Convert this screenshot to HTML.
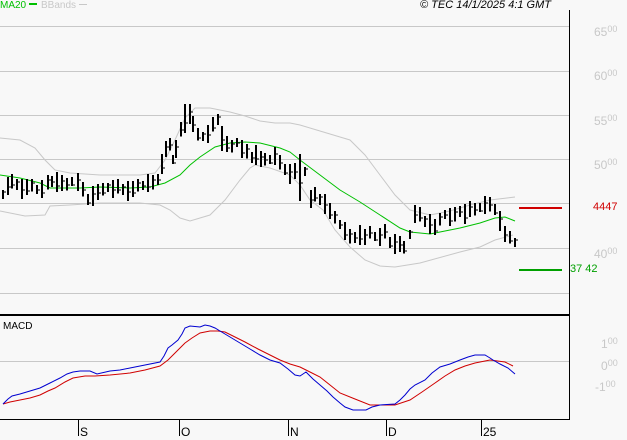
<!DOCTYPE html>
<html><head><meta charset="utf-8"><style>
html,body{margin:0;padding:0;background:#f8f8f8;width:627px;height:440px;overflow:hidden;font-family:"Liberation Sans",sans-serif}
.t{position:absolute;font-size:11px;white-space:nowrap}
.g{color:#c8c8c8;font-size:12px}
.g sup{font-size:9px;vertical-align:4px}
</style></head><body>
<div class="t" style="left:0;top:0;color:#00c000;font-size:10px">MA20 <span style="display:inline-block;width:8px;height:2px;background:#00c000;vertical-align:3px"></span></div>
<div class="t" style="left:41px;top:0;color:#c8c8c8;font-size:10px">BBands <span style="display:inline-block;width:8px;height:1px;background:#c8c8c8;vertical-align:3px"></span></div>
<div class="t" style="left:420px;top:-1px;color:#000;font-style:italic">© TEC 14/1/2025 4:1 GMT</div>
<div class="t g" style="left:594px;top:24px">65<sup>00</sup></div>
<div class="t g" style="left:594px;top:68px">60<sup>00</sup></div>
<div class="t g" style="left:594px;top:113px">55<sup>00</sup></div>
<div class="t g" style="left:594px;top:157px">50<sup>00</sup></div>
<div class="t g" style="left:594px;top:246px">40<sup>00</sup></div>
<div class="t" style="left:593px;top:201px;color:#d00000;font-size:11px">4447</div>
<div class="t" style="left:570px;top:263px;color:#00a000;font-size:11px">37 42</div>
<div class="t g" style="left:601px;top:336px">1<sup>00</sup></div>
<div class="t g" style="left:601px;top:358px">0<sup>00</sup></div>
<div class="t g" style="left:595px;top:379px">-1<sup>00</sup></div>
<div class="t" style="left:3px;top:321px;font-size:10px">MACD</div>
<div class="t" style="left:80px;top:425px;font-size:12px">S</div>
<div class="t" style="left:181px;top:425px;font-size:12px">O</div>
<div class="t" style="left:290px;top:425px;font-size:12px">N</div>
<div class="t" style="left:388px;top:425px;font-size:12px">D</div>
<div class="t" style="left:483px;top:425px;font-size:12px">25</div>
<svg id="s" width="627" height="440" style="position:absolute;left:0;top:0" xmlns="http://www.w3.org/2000/svg">
<g stroke="#c8c8c8" stroke-width="1">
<line x1="0" y1="26.5" x2="569" y2="26.5"/><line x1="0" y1="71.5" x2="569" y2="71.5"/><line x1="0" y1="115.5" x2="569" y2="115.5"/><line x1="0" y1="159.5" x2="569" y2="159.5"/><line x1="0" y1="203.5" x2="569" y2="203.5"/><line x1="0" y1="248.5" x2="569" y2="248.5"/><line x1="0" y1="293.5" x2="569" y2="293.5"/><line x1="0" y1="361.5" x2="569" y2="361.5"/>
</g>
<g stroke="#000" stroke-width="1" fill="none">
<line x1="569.5" y1="10" x2="569.5" y2="419"/>
<line x1="0" y1="315" x2="570" y2="315" stroke-width="2"/>
<line x1="0" y1="419.5" x2="570" y2="419.5"/>
<line x1="78.5" y1="419" x2="78.5" y2="436"/><line x1="179.5" y1="419" x2="179.5" y2="436"/><line x1="288.5" y1="419" x2="288.5" y2="436"/><line x1="386.5" y1="419" x2="386.5" y2="436"/><line x1="481.5" y1="419" x2="481.5" y2="436"/>
</g>
<line x1="519" y1="208" x2="562" y2="208" stroke="#d00000" stroke-width="2"/>
<line x1="519" y1="270" x2="562" y2="270" stroke="#00a000" stroke-width="2"/>
<g fill="none" stroke-width="1">
<polyline stroke="#c8c8c8" points="0,138 20,140 35,148 45,160 55,170 70,173 100,175 140,175 155,173 165,160 175,140 185,118 195,108 210,108 230,112 245,116 260,121 275,123 290,123 300,125 320,131 340,137 350,140 365,155 380,175 395,195 410,210 430,215 450,211 470,205 490,200 515,197"/>
<polyline stroke="#c8c8c8" points="0,211 25,216 45,215 50,206 70,205 100,203 140,203 160,205 170,210 180,218 190,221 200,218 210,215 225,200 240,180 250,168 255,165 270,168 290,175 300,185 310,200 323,210 335,230 350,247 365,260 380,266 395,267 420,263 460,252 480,247 495,240 513,235"/>
<polyline stroke="#00c000" points="0,175 20,178 40,183 50,188 80,188 100,187 130,188 150,187 165,183 180,175 190,165 200,157 215,147 230,143 245,142 260,143 280,148 290,152 300,160 320,175 340,190 360,202 380,215 400,228 410,232 420,233 430,234 450,230 460,228 480,223 495,218 505,217 515,221"/>
<polyline stroke="#d00000" points="3,404 10,402 20,400 30,398 40,395 48,391 55,388 65,382 73,378 85,376 95,376 110,375 130,373 145,370 160,366 168,360 175,353 180,348 185,343 192,338 200,333 210,331 218,331 225,332 235,337 245,342 258,349 270,355 280,360 290,364 300,367 310,372 320,377 330,385 340,393 355,399 370,405 395,405 410,400 422,392 435,383 445,376 455,370 465,366 475,363 490,360 505,362 513,366"/>
<polyline stroke="#0000d0" points="3,404 8,399 12,396 20,394 30,391 40,388 50,383 60,378 67,374 73,372 80,371 90,371 97,374 110,371 120,370 130,368 145,365 160,362 164,356 168,348 172,345 178,340 182,334 185,328 190,326 200,327 205,325 210,326 215,328 220,331 230,337 240,343 250,349 260,355 270,360 280,363 288,369 295,375 300,376 306,372 313,379 320,385 327,391 333,397 340,403 345,407 353,410 366,410 372,407 380,405 395,404 400,400 405,395 410,389 415,385 425,380 432,373 440,367 450,364 460,360 468,357 475,355 485,355 490,358 493,360 500,364 508,368 515,374"/>
</g>
<g id="bars" stroke="#000" stroke-width="2" shape-rendering="crispEdges"></g>
</svg>
<script>
var d=[[3,195],[8,187],[12,182],[17,185],[22,190],[27,188],[32,186],[37,190],[42,190],[48,183],[52,182],[57,183],[62,184],[67,185],[72,182],[78,183],[83,190],[88,200],[93,197],[98,193],[103,190],[108,188],[113,190],[118,187],[123,190],[128,192],[133,190],[138,186],[143,186],[148,184],[153,183],[158,180],[162,165],[166,150],[170,145],[173,160],[176,150],[181,130],[185,120],[190,115],[193,125],[198,135],[203,137],[208,135],[213,125],[218,120],[222,140],[227,145],[232,147],[237,143],[242,150],[247,152],[252,158],[256,156],[261,160],[265,160],[270,160],[275,157],[280,163],[285,170],[290,175],[295,172],[300,180],[305,172],[311,200],[315,195],[320,200],[325,205],[330,212],[335,218],[340,225],[345,232],[350,237],[355,238],[360,236],[365,238],[370,233],[375,237],[380,238],[385,232],[390,243],[395,245],[400,245],[404,248],[410,235],[415,215],[420,215],[425,222],[430,225],[435,228],[440,220],[445,215],[450,218],[455,215],[460,212],[465,215],[470,210],[475,210],[480,208],[485,206],[490,205],[495,210],[500,222],[505,235],[510,238],[515,243]];
var g=document.getElementById('bars'),h='';
for(var i=0;i<d.length;i++){var x=d[i][0],y=d[i][1],r=5+((i*5)%7);if(i==38)r=16;if(i==62)r=26;if(i==46)r=14;
var t=y+((i%3)-1)*3;
h+='<line x1="'+x+'" y1="'+(y-r)+'" x2="'+x+'" y2="'+(y+r*0.8)+'"/>';
h+='<line x1="'+x+'" y1="'+t+'" x2="'+(x+3)+'" y2="'+t+'" stroke-width="1"/>';}
g.innerHTML=h;
</script>
</body></html>
